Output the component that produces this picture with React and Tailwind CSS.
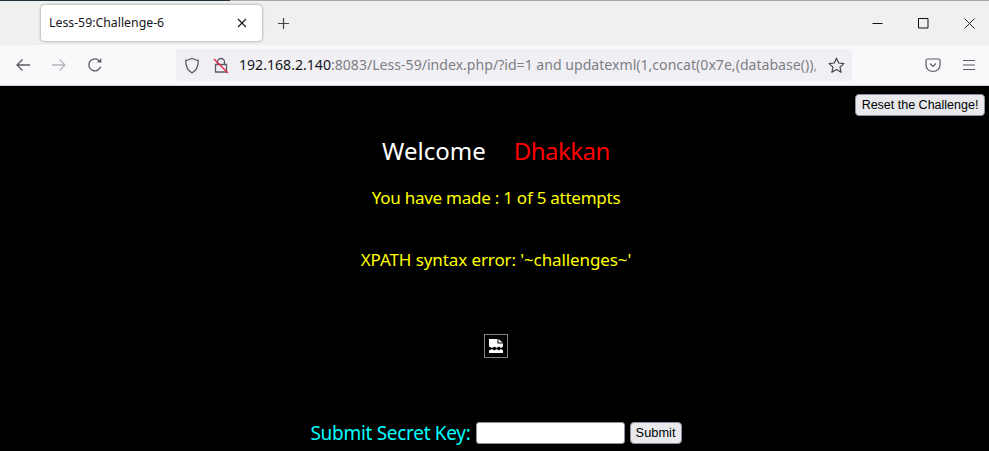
import React from 'react';

const Tab = () => (
    <div className="ml-[41px] mt-[4px] w-[221px] h-[36px] bg-white rounded-[4px] shadow-[0_0_3px_rgba(0,0,0,0.45)] flex items-center pl-[8px] pr-[15px]">
        <span className="flex-1 text-[12.3px] text-[#15141a] whitespace-nowrap">Less-59:Challenge-6</span>
        <svg width="10" height="10" viewBox="0 0 10 10" stroke="#15141a" strokeWidth="1.1" fill="none">
            <path d="M1 1l8 8M9 1l-8 8" />
        </svg>
    </div>
);

const TitleBar = () => (
    <div className="h-[44px] bg-[#f0f0f0] flex items-start">
        <Tab />
        <svg className="ml-[15px] mt-[16px]" width="13" height="13" viewBox="0 0 13 13" stroke="#45444b" strokeWidth="1.2" fill="none">
            <path d="M6.5 1v11M1 6.5h11" />
        </svg>
        <div className="ml-auto flex items-center h-[44px]">
            <svg className="mr-[35px]" width="11" height="11" viewBox="0 0 11 11" stroke="#111" strokeWidth="1" fill="none">
                <path d="M0.5 5.5h10" />
            </svg>
            <svg className="mr-[35px]" width="11" height="11" viewBox="0 0 11 11" stroke="#111" strokeWidth="1" fill="none">
                <path d="M0.5 0.5h9.5v9.5h-9.5z" />
            </svg>
            <svg className="mr-[14px]" width="11" height="11" viewBox="0 0 11 11" stroke="#111" strokeWidth="0.9" fill="none">
                <path d="M0.5 0.5l10 10M10.5 0.5l-10 10" />
            </svg>
        </div>
    </div>
);

const ToolBar = () => (
    <div className="h-[41px] bg-[#f9f9fb] border-b border-[#cfcfd8] flex items-center">
        <svg className="ml-[15px]" width="16" height="16" viewBox="0 0 16 16" stroke="#5b5b66" strokeWidth="1.3" fill="none">
            <path d="M15 8H2M7.5 2.5L2 8l5.5 5.5" />
        </svg>
        <svg className="ml-[20px]" width="16" height="16" viewBox="0 0 16 16" stroke="#b4b4ba" strokeWidth="1.3" fill="none">
            <path d="M1 8h13M8.5 2.5L14 8l-5.5 5.5" />
        </svg>
        <svg className="ml-[20px]" width="16" height="16" viewBox="0 0 16 16" stroke="#5b5b66" strokeWidth="1.3" fill="none">
            <path d="M13.6 9.5A6 6 0 1 1 11.5 3.2L14 5" />
            <path d="M14.3 1.2V5.6H9.9z" fill="#5b5b66" stroke="none" />
        </svg>
        {/* url bar */}
        <div className="ml-[73px] w-[676px] h-[32px] bg-[#f0f0f4] rounded-[4px] flex items-center overflow-hidden relative">
            <svg className="ml-[8px] shrink-0" width="16" height="17" viewBox="0 0 16 17" stroke="#5b5b66" strokeWidth="1.3" fill="none">
                <path d="M8 1.2c2 1.3 4.2 2 6.3 2.1 0 6-1.6 10.4-6.3 12.5C3.3 13.7 1.7 9.3 1.7 3.3 3.8 3.2 6 2.5 8 1.2z" />
            </svg>
            <svg className="ml-[13px] shrink-0" width="16" height="17" viewBox="0 0 16 17" fill="none">
                <path d="M4.5 7V5a3.5 3.5 0 0 1 7 0v2M2.5 7.5h11v7.5h-11z" stroke="#5b5b66" strokeWidth="1.3" />
                <path d="M1 2l14 14" stroke="#f0244f" strokeWidth="1.4" />
            </svg>
            <div className="ml-[10px] text-[14.1px] whitespace-nowrap text-[#7e7e85]">
                <span className="text-[#15141a]">192.168.2.140</span>:8083/Less-59/index.php/?id=1 and updatexml(1,concat(0x7e,(database()),
            </div>
            <div className="absolute right-0 top-0 h-full w-[40px] bg-gradient-to-r from-transparent to-[#f0f0f4] to-[35%] flex items-center justify-end pr-[7px]">
                <svg width="17" height="17" viewBox="0 0 17 17" stroke="#45444b" strokeWidth="1.2" fill="none" strokeLinejoin="round">
                    <path d="M8.5 1.2l2.2 4.8 5.2.6-3.9 3.5 1.1 5.2-4.6-2.7-4.6 2.7 1.1-5.2L1.1 6.6l5.2-.6z" />
                </svg>
            </div>
        </div>
        <svg className="ml-[73px]" width="16" height="16" viewBox="0 0 16 16" stroke="#5b5b66" strokeWidth="1.2" fill="none">
            <path d="M2.5 2h11A1.5 1.5 0 0 1 15 3.5V8a7 6.5 0 0 1-14 0V3.5A1.5 1.5 0 0 1 2.5 2z" />
            <path d="M5 6.5L8 9.5l3-3" />
        </svg>
        <svg className="ml-[21px]" width="14" height="14" viewBox="0 0 14 14" stroke="#5b5b66" strokeWidth="1.2" fill="none">
            <path d="M1 2.5h12M1 7h12M1 11.5h12" />
        </svg>
    </div>
);

const BrokenImage = () => (
    <div className="ml-[484px] w-[24px] h-[24px] border border-[#808080] flex items-center justify-center">
        <svg width="16" height="16" viewBox="0 0 16 16" fill="#fff">
            <path d="M1 1h8.500v4.500H15v3l-2 1.500-2-1.500-2.500 1.500-2-1.500-2.500 1.500-3-1.500z" />
            <path d="M10.500 1l4 3.500h-4z" />
            <path d="M1 12.500l3-1.500 2.500 1.500 2-1.500 2.500 1.500 2-1.500 2 1.500v2.500H1z" />
        </svg>
    </div>
);

const Content = () => (
    <div className="h-[365px] bg-black overflow-hidden font-['Noto_Sans','Open_Sans',sans-serif]">
        <div className="flex justify-end pt-[8px] pr-[4px] h-[31px]">
            <button className="w-[130px] h-[22px] bg-[#e9e9ed] border border-[#8f8f9d] rounded-[4px] text-[12.5px] leading-none text-black font-['Liberation_Sans',sans-serif]">
                Reset the Challenge!
            </button>
        </div>
        <div className="mt-[16px] flex justify-center text-[24px] leading-[36px] tracking-[-0.5px] pl-[3px]">
            <span className="text-white tracking-[0px]">Welcome</span>
            <span className="text-[#ff0000] ml-[28px]">Dhakkan</span>
        </div>
        <p className="mt-[16px] text-center text-[17px] leading-[26px] tracking-[-0.25px] text-[#ffff00] pl-[3px]">You have made : 1 of 5 attempts</p>
        <p className="mt-[36px] text-center text-[17px] leading-[26px] tracking-[-0.1px] text-[#ffff00] pl-[3px]">XPATH syntax error: '~challenges~'</p>
        <div className="mt-[61px]">
            <BrokenImage />
        </div>
        <div className="mt-[61px] flex justify-center items-center pl-[3px]">
            <span className="text-[#00ffff] text-[19px] leading-[28px] tracking-[-0.3px]">Submit Secret Key:</span>
            <input className="ml-[5px] w-[149px] h-[22px] bg-white border border-[#8f8f9d] rounded-[3px]" />
            <button className="ml-[5px] w-[52px] h-[22px] bg-[#e9e9ed] border border-[#8f8f9d] rounded-[4px] text-[12.8px] leading-none text-black font-['Liberation_Sans',sans-serif]">
                Submit
            </button>
        </div>
    </div>
);

const App = () => {
    return (
        <div className="w-[989px] h-[451px] overflow-hidden font-['Noto_Sans',sans-serif]">
            <div className="flex h-[1px]">
                <div className="w-[230px] bg-[#1f2f38]" />
                <div className="flex-1 bg-[#a8a8ac]" />
            </div>
            <TitleBar />
            <ToolBar />
            <Content />
        </div>
    );
};

export default App;
